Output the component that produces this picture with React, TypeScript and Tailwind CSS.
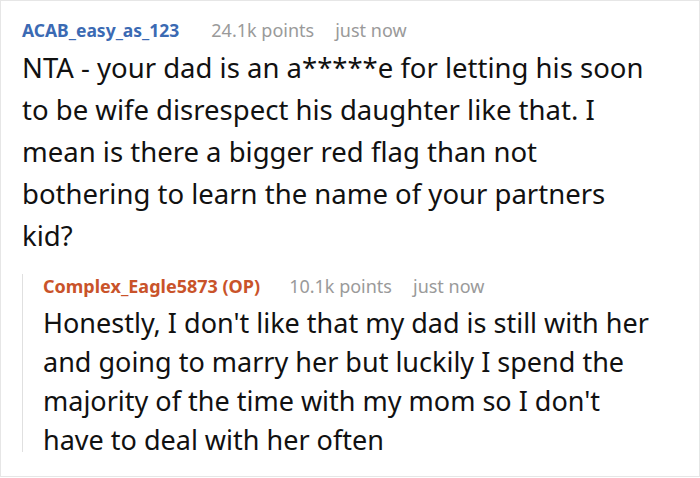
import React from "react";

export default function App() {
  return (
    <div className="w-[700px] h-[478px] bg-white overflow-hidden" style={{ fontFamily: '"Noto Sans", "Open Sans", sans-serif' }}>
      <div className="w-[700px] h-[477px] border border-[#e6e6e6] pl-[21px] pr-[8px] pt-[17px]">
        <div className="flex items-baseline text-[17.5px] leading-[24px]">
          <span className="font-bold text-[#3b6ab3]">ACAB_easy_as_123</span>
          <span className="text-[#9a9a9a] text-[18px] ml-[32px]">24.1k points</span>
          <span className="text-[#9a9a9a] text-[18px] ml-[21px]">just now</span>
        </div>
        <p className="text-[27.5px] leading-[42px] text-[#111] mt-[5px] whitespace-nowrap">
          NTA - your dad is an a*****e for letting his soon
          <br />
          to be wife disrespect his daughter like that. I
          <br />
          mean is there a bigger red flag than not
          <br />
          bothering to learn the name of your partners
          <br />
          kid?
        </p>
        <div className="mt-[27px] border-l border-[#e0e0e0] pl-[20px] h-[178px]">
          <div className="flex items-baseline text-[18px] leading-[24px] -mt-[10px]">
            <span className="font-bold text-[#c9532a]">Complex_Eagle5873 (OP)</span>
            <span className="text-[#9a9a9a] text-[18px] ml-[29px]">10.1k points</span>
            <span className="text-[#9a9a9a] text-[18px] ml-[21px]">just now</span>
          </div>
          <p className="text-[27px] leading-[39px] text-[#111] mt-[5px] whitespace-nowrap">
            Honestly, I don't like that my dad is still with her
            <br />
            and going to marry her but luckily I spend the
            <br />
            majority of the time with my mom so I don't
            <br />
            have to deal with her often
          </p>
        </div>
      </div>
    </div>
  );
}
